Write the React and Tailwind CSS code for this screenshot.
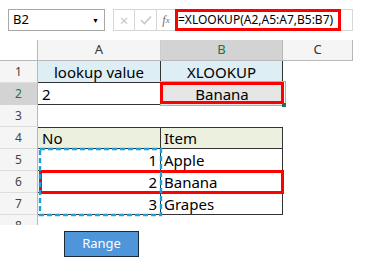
import React from "react";

const RowHead = ({ n, active }) => (
  <div
    className={
      active
        ? "w-[38px] h-[22px] shrink-0 flex items-center justify-center bg-[#d3d3d3] border-r border-r-[#b8b8b8] border-b border-b-[#d4d4d4] text-[12px] text-[#217346]"
        : "w-[38px] h-[22px] shrink-0 flex items-center justify-center bg-[#f5f5f5] border-r border-r-[#b8b8b8] border-b border-b-[#dedede] text-[12px] text-[#444]"
    }
  >
    {n}
  </div>
);

export default function App() {
  const cell = "h-[22px] shrink-0 flex items-center pt-[1px] text-[15px] text-black leading-none";
  return (
    <div
      className="w-[373px] h-[263px] bg-white overflow-hidden"
      style={{ fontFamily: '"Noto Sans", "Liberation Sans", sans-serif' }}
    >
      {/* formula bar */}
      <div className="h-[40px] flex items-start pt-[9px] pl-[8px]">
        <div className="w-[97px] h-[22px] border border-[#a8a8a8] flex items-center justify-between pl-[4px] pr-[5px] text-[13px] text-black">
          <span>B2</span>
          <span className="text-[7px] leading-none">▼</span>
        </div>
        <div className="ml-[8px] w-[240px] h-[22px] flex border-t border-r border-b border-[#d6d6d6]">
          <div className="w-[22px] h-full border-l border-r border-[#d6d6d6] flex items-center justify-center text-[#c8c8c8] text-[15px] leading-none">
            ×
          </div>
          <div className="w-[22px] h-full border-r border-[#d6d6d6] flex items-center justify-center">
            <svg width="12" height="10" viewBox="0 0 12 10">
              <path d="M1 5 L4.5 8.5 L11 1.5" fill="none" stroke="#c8c8c8" strokeWidth="1.6" />
            </svg>
          </div>
          <div
            className="w-[18px] h-full flex items-center justify-center text-[12px] italic text-[#6f6f6f] leading-none"
            style={{ fontFamily: '"Liberation Serif", serif' }}
          >
            f<span className="text-[9px]">x</span>
          </div>
          <div className="w-[166px] h-[22px] -mt-[1px] border-[3px] border-[#ff0000] flex items-center text-[12px] text-black leading-none whitespace-nowrap">
            =XLOOKUP(A2,A5:A7,B5:B7)
          </div>
        </div>
      </div>

      {/* grid */}
      <div className="relative h-[185px] overflow-hidden">
        {/* column headers */}
        <div className="flex h-[21px]">
          <div className="w-[38px] h-full shrink-0 bg-white border-r border-r-[#b8b8b8] border-b border-b-[#b8b8b8]" />
          <div className="w-[123px] h-full shrink-0 bg-[#f5f5f5] border-r border-r-[#cdcdcd] border-b border-b-[#b8b8b8] flex items-center justify-center text-[13px] text-[#333]">
            A
          </div>
          <div className="w-[122px] h-full shrink-0 bg-[#d3d3d3] border-r border-r-[#b8b8b8] border-b border-b-[#b8b8b8] flex items-center justify-center text-[13px] text-[#217346]">
            B
          </div>
          <div className="w-[70px] h-full shrink-0 bg-[#f5f5f5] border-r border-r-[#b8b8b8] border-b border-b-[#b8b8b8] flex items-center justify-center text-[13px] text-[#333]">
            C
          </div>
        </div>

        {/* row 1 */}
        <div className="flex">
          <RowHead n="1" />
          <div className={`${cell} w-[123px] justify-center bg-[#ddeef5] border-r border-b border-[#333]`}>lookup value</div>
          <div className={`${cell} w-[122px] justify-center bg-[#ddeef5] border-r border-b border-[#333]`}>XLOOKUP</div>
        </div>
        {/* row 2 */}
        <div className="flex">
          <RowHead n="2" active />
          <div className={`${cell} w-[123px] pl-[4px] bg-white border-b border-[#333]`}>2</div>
          <div className={`${cell} w-[122px] justify-center bg-[#e7e6e6]`}>Banana</div>
        </div>
        {/* row 3 */}
        <div className="flex">
          <RowHead n="3" />
        </div>
        {/* row 4 */}
        <div className="flex">
          <RowHead n="4" />
          <div className={`${cell} w-[123px] pl-[4px] bg-[#ebf1de] border-t border-r border-b border-[#333]`}>No</div>
          <div className={`${cell} w-[122px] pl-[3px] bg-[#ebf1de] border-t border-r border-b border-[#333]`}>Item</div>
        </div>
        {/* row 5 */}
        <div className="flex">
          <RowHead n="5" />
          <div className={`${cell} w-[123px] justify-end pr-[3px] border-r border-b border-[#333]`}>1</div>
          <div className={`${cell} w-[122px] pl-[3px] border-r border-b border-[#333]`}>Apple</div>
        </div>
        {/* row 6 */}
        <div className="flex">
          <RowHead n="6" />
          <div className={`${cell} w-[123px] justify-end pr-[3px] border-r border-b border-[#333]`}>2</div>
          <div className={`${cell} w-[122px] pl-[3px] border-r border-b border-[#333]`}>Banana</div>
        </div>
        {/* row 7 */}
        <div className="flex">
          <RowHead n="7" />
          <div className={`${cell} w-[123px] justify-end pr-[3px] border-r border-b border-[#333]`}>3</div>
          <div className={`${cell} w-[122px] pl-[3px] border-r border-b border-[#333]`}>Grapes</div>
        </div>
        {/* row 8 */}
        <div className="flex">
          <RowHead n="8" />
        </div>

        {/* selection of B2 */}
        <div className="absolute left-[160px] top-[41px] w-[126px] h-[25px] border border-[#8cc3a4]" />
        <div className="absolute left-[160px] top-[42px] w-[124px] h-[22px] border-[3px] border-[#ff0000]" />
        <div className="absolute left-[282px] top-[63px] w-[4px] h-[4px] bg-[#217346]" />

        {/* red box on row 6 */}
        <div className="absolute left-[39px] top-[130px] w-[245px] h-[24px] border-[3px] border-[#ff0000]" />

        {/* marching ants on A5:A7 */}
        <svg className="absolute left-[38px] top-[107px]" width="125" height="70" viewBox="0 0 125 70">
          <rect x="2" y="2" width="121" height="66" fill="none" stroke="#1f9fd8" strokeWidth="2.4" strokeDasharray="5 3" />
        </svg>
      </div>

      {/* button */}
      <div className="ml-[64px] mt-[6px] w-[75px] h-[26px] bg-[#4f95da] border border-[#1c2b3a] flex items-center justify-center text-white text-[13px]">
        Range
      </div>
    </div>
  );
}
